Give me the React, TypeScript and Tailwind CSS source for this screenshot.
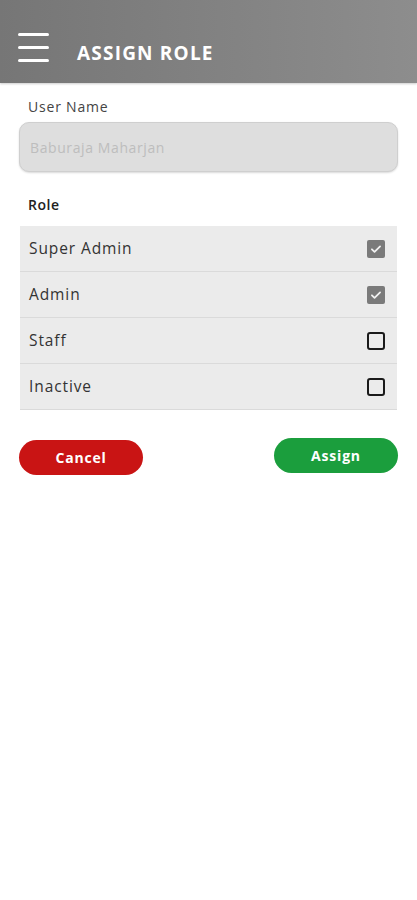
import React from "react";

const roles = [
  { name: "Super Admin", checked: true },
  { name: "Admin", checked: true },
  { name: "Staff", checked: false },
  { name: "Inactive", checked: false },
];

function Box({ checked }: { checked: boolean }) {
  if (checked) {
    return (
      <div className="w-[18px] h-[18px] rounded-[2px] bg-[#7a7a7a] flex items-center justify-center">
        <svg width="14" height="14" viewBox="0 0 24 24" fill="none" stroke="#f2f2f2" strokeWidth="3" strokeLinecap="round" strokeLinejoin="round">
          <path d="M5 12.5l4.5 4.5L19 7.5" />
        </svg>
      </div>
    );
  }
  return <div className="w-[18px] h-[18px] rounded-[3px] border-2 border-[#1a1a1a]" />;
}

export default function App() {
  return (
    <div className="w-[417px] h-[900px] bg-white flex flex-col" style={{ fontFamily: "'Open Sans', 'Liberation Sans', sans-serif" }}>
      <div className="h-[83px] bg-gradient-to-r from-[#767676] to-[#8d8d8d] flex items-end pb-[21px] pl-[18px] shadow-[0_1px_2px_rgba(0,0,0,0.2)]">
        <div className="flex flex-col gap-[10px]">
          <div className="w-[31px] h-[3px] bg-white rounded-full" />
          <div className="w-[31px] h-[3px] bg-white rounded-full" />
          <div className="w-[31px] h-[3px] bg-white rounded-full" />
        </div>
        <div className="ml-[28px] mb-[-3px] text-white font-bold text-[19px] leading-[24px] tracking-[1.2px]">ASSIGN ROLE</div>
      </div>

      <div className="px-[19px] pt-[14px]">
        <div className="pl-[9px] text-[14px] text-[#444] leading-[20px] tracking-[0.8px]">User Name</div>
        <div className="mt-[5px] h-[50px] rounded-[10px] bg-[#dedede] border border-[#cfcfcf] shadow-[0_1px_2px_rgba(0,0,0,0.15)] flex items-center pl-[10px] text-[14px] text-[#bdbdbd] tracking-[0.6px]">
          Baburaja Maharjan
        </div>
        <div className="mt-[23px] pl-[9px] text-[14px] font-semibold text-[#222] leading-[20px] tracking-[0.5px]">Role</div>
        <div className="mt-[11px] mx-[1px] bg-[#ebebeb]">
          {roles.map((r) => (
            <div key={r.name} className="h-[46px] border-b border-[#dadada] flex items-center justify-between pl-[9px] pr-[12px]">
              <span className="text-[15.5px] text-[#333] tracking-[0.9px]">{r.name}</span>
              <Box checked={r.checked} />
            </div>
          ))}
        </div>
        <div className="mt-[28px] flex justify-between items-start">
          <button className="mt-[2px] w-[124px] h-[35px] rounded-full bg-[#c91414] text-white font-bold text-[14px] tracking-[0.8px]">Cancel</button>
          <button className="w-[124px] h-[35px] rounded-full bg-[#1b9e3d] text-white font-bold text-[14px] tracking-[0.8px]">Assign</button>
        </div>
      </div>
    </div>
  );
}
